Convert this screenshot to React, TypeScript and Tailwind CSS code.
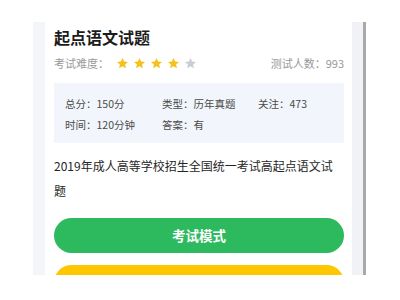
const FONT = '[font-family:"Noto_Sans_CJK_SC","Noto_Sans",sans-serif]';

function Star({ on }: { on: boolean }) {
  return (
    <svg width="13" height="13" viewBox="0 0 24 24" className="shrink-0">
      <path
        d="M12 1.8l3 6.5 7.1.8-5.3 4.8 1.5 7-6.3-3.6-6.3 3.6 1.5-7L1.9 9.1 9 8.3z"
        fill={on ? '#f5c11c' : '#c9cdd6'}
      />
    </svg>
  );
}

const INFO = [
  ['总分：150分', '类型：历年真题', '关注：473'],
  ['时间：120分钟', '答案：有', ''],
];

export default function App() {
  return (
    <div className={`flex h-[300px] w-[400px] flex-col overflow-hidden bg-white ${FONT}`}>
      <div className="h-[22px] shrink-0" />
      {/* phone frame, clipped at the bottom */}
      <div className="ml-[33px] flex h-[253px] w-[333px] shrink-0 overflow-hidden">
        <div className="w-[12px] bg-[#f4f5f8]" />
        <div className="w-[307px] overflow-hidden bg-white pl-[9px] pr-[8px] pt-[4px]">
          <h1 className="text-[16px] font-bold leading-[22px] text-[#1c1c1c]">起点语文试题</h1>

          <div className="mt-[5px] flex h-[20px] items-center text-[11px] text-[#9a9a9a]">
            <span>考试难度：</span>
            <div className="ml-[7px] flex gap-[4px]">
              {[1, 2, 3, 4, 5].map((n) => (
                <Star key={n} on={n <= 4} />
              ))}
            </div>
            <span className="ml-auto">测试人数：993</span>
          </div>

          <div className="mt-[10px] h-[60px] bg-[#f2f6fc] pl-[11px] pt-[10px] text-[10.5px] text-[#4a4a4a]">
            {INFO.map((row, i) => (
              <div key={i} className="grid h-[21px] grid-cols-[97px_96px_1fr] items-center">
                {row.map((c, j) => (
                  <span key={j}>{c}</span>
                ))}
              </div>
            ))}
          </div>

          <p className="mt-[10px] text-[12px] leading-[25px] text-[#262626]">
            2019年成人高等学校招生全国统一考试高起点语文试题
          </p>

          <button className="mt-[15px] flex h-[35px] w-full items-center justify-center rounded-full bg-[#2db95e] text-[13.5px] font-bold text-white">
            考试模式
          </button>
          <div className="mt-[12px] h-[35px] w-full rounded-full bg-[#ffc700]" />
        </div>
        <div className="w-[11px] bg-[#f1f2f5]" />
        <div className="w-[3px] bg-[#a9a9a9]" />
      </div>
      <div className="flex-1 bg-white" />
    </div>
  );
}
